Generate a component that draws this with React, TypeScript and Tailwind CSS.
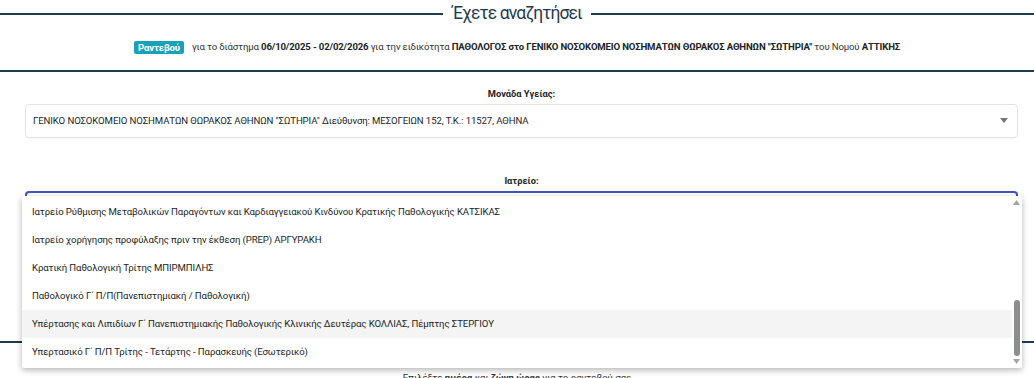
import { useState } from "react";

const options = [
  "Ιατρείο Ρύθμισης Μεταβολικών Παραγόντων και Καρδιαγγειακού Κινδύνου Κρατικής Παθολογικής ΚΑΤΣΙΚΑΣ",
  "Ιατρείο χορήγησης προφύλαξης πριν την έκθεση (PREP) ΑΡΓΥΡΑΚΗ",
  "Κρατική Παθολογική Τρίτης ΜΠΙΡΜΠΙΛΗΣ",
  "Παθολογικό Γ΄ Π/Π(Πανεπιστημιακή / Παθολογική)",
  "Υπέρτασης και Λιπιδίων Γ΄ Πανεπιστημιακής Παθολογικής Κλινικής Δευτέρας ΚΟΛΛΙΑΣ, Πέμπτης ΣΤΕΡΓΙΟΥ",
  "Υπερτασικό Γ΄ Π/Π Τρίτης - Τετάρτης - Παρασκευής (Εσωτερικό)",
];

export default function App() {
  const [hover] = useState(4);

  return (
    <div className="relative w-[1034px] h-[378px] overflow-hidden bg-white font-['Roboto',sans-serif] text-[#212529]">
      {/* heading */}
      <div className="flex items-center h-[28px] gap-2">
        <div className="flex-1 h-[2px] bg-[#1f3b4d]" />
        <h2 className="text-[17.5px] leading-none tracking-[-0.9px] text-[#1f3b4d] px-[1px]">Έχετε αναζητήσει</h2>
        <div className="flex-1 h-[2px] bg-[#1f3b4d]" />
      </div>

      <p className="mt-[11px] h-[16px] flex items-center justify-center text-[9.6px] tracking-[-0.15px] text-[#333]">
        <span className="bg-[#17a2b8] text-white font-bold text-[9.6px] leading-[13px] px-[4px] rounded-[2px] mr-[8px]">Ραντεβού</span>
        <span>
          για το διάστημα <b className="text-[#212529]">06/10/2025 - 02/02/2026</b> για την ειδικότητα{" "}
          <b className="text-[#212529]">ΠΑΘΟΛΟΓΟΣ στο ΓΕΝΙΚΟ ΝΟΣΟΚΟΜΕΙΟ ΝΟΣΗΜΑΤΩΝ ΘΩΡΑΚΟΣ ΑΘΗΝΩΝ "ΣΩΤΗΡΙΑ"</b> του Νομού{" "}
          <b className="text-[#212529]">ΑΤΤΙΚΗΣ</b>
        </span>
      </p>

      <div className="mt-[15px] h-[2px] bg-[#1f3b4d]" />

      <div className="px-[25px] pr-[16px]">
        <label className="mt-[15px] block text-center text-[9.3px] leading-[14px] font-bold">Μονάδα Υγείας:</label>
        <div className="mt-[3px] h-[34px] flex items-center justify-between border border-[#e2e5e8] rounded-[4px] shadow-[0_1px_2px_rgba(0,0,0,0.04)] pl-[7px] pr-[9px] text-[9.6px] tracking-[-0.1px]">
          <span>ΓΕΝΙΚΟ ΝΟΣΟΚΟΜΕΙΟ ΝΟΣΗΜΑΤΩΝ ΘΩΡΑΚΟΣ ΑΘΗΝΩΝ "ΣΩΤΗΡΙΑ" Διεύθυνση: ΜΕΣΟΓΕΙΩΝ 152, Τ.Κ.: 11527, ΑΘΗΝΑ</span>
          <svg width="8" height="5" viewBox="0 0 8 5" className="mt-[-2px]">
            <path d="M0 0h8L4 5z" fill="#757575" />
          </svg>
        </div>

        <label className="mt-[36px] block text-center text-[9.3px] leading-[14px] font-bold">Ιατρείο:</label>
        <div className="mt-[3px] h-[34px] border-2 border-[#4355b9] rounded-[4px]" />
      </div>

      <div className="mt-[116px] h-[2px] bg-[#1f3b4d]" />
      <p className="mt-[28px] text-center text-[9.6px] text-[#333]">
        Επιλέξτε <b>ημέρα</b> και <b>ζώνη ώρας</b> για το ραντεβού σας
      </p>

      {/* open dropdown list */}
      <div className="absolute left-[22px] top-[196px] w-[1000px] h-[172px] bg-white rounded-[2px] shadow-[0_2px_6px_rgba(0,0,0,0.3)] flex">
        <ul className="flex-1 py-[2px]">
          {options.map((o, i) => (
            <li
              key={o}
              className={`h-[28px] flex items-center pl-[10px] text-[9.6px] tracking-[-0.1px] text-[#212529] ${i === hover ? "bg-[#f4f4f4]" : ""}`}
            >
              {o}
            </li>
          ))}
        </ul>
        <div className="w-[10px] flex flex-col items-center py-[3px] pr-[1px]">
          <svg width="7" height="5" viewBox="0 0 7 5" className="mt-[1px]">
            <path d="M3.5 0L7 5H0z" fill="#a3a3a3" />
          </svg>
          <div className="flex-1 w-full flex flex-col justify-end pb-[3px]">
            <div className="mx-auto w-[6px] h-[56px] rounded-full bg-[#8d8d8d]" />
          </div>
          <svg width="7" height="5" viewBox="0 0 7 5" className="mb-[1px]">
            <path d="M0 0h7L3.5 5z" fill="#a3a3a3" />
          </svg>
        </div>
      </div>
    </div>
  );
}
